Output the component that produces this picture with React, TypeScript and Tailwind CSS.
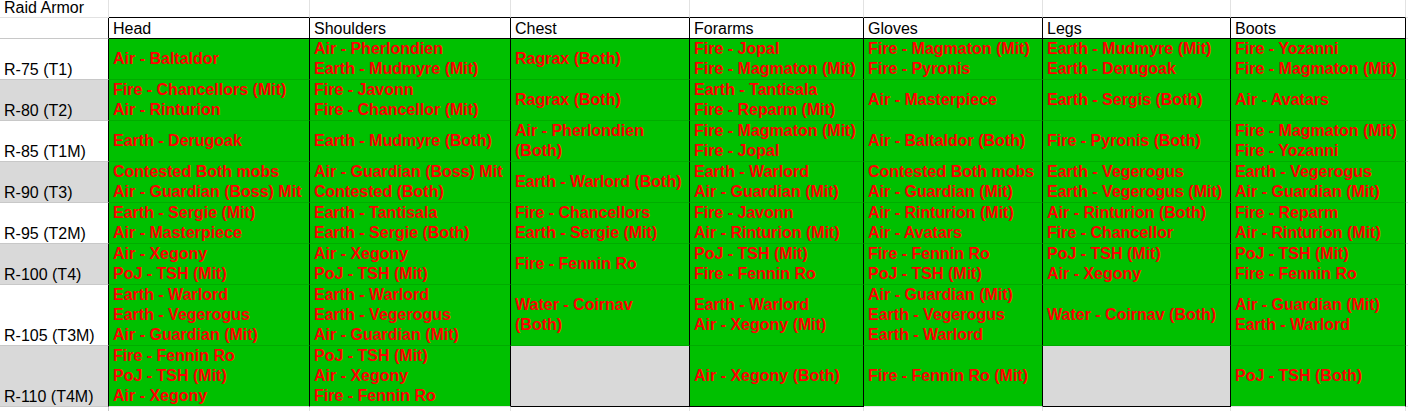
const headers = ['Head', 'Shoulders', 'Chest', 'Forarms', 'Gloves', 'Legs', 'Boots']

type Row = { label: string; gray: boolean; tall?: boolean; cells: (string[] | null)[] }

const rows: Row[] = [
  {
    label: 'R-75 (T1)',
    gray: false,
    cells: [
      ['Air - Baltaldor'],
      ['Air - Pherlondien', 'Earth - Mudmyre (Mit)'],
      ['Ragrax (Both)'],
      ['Fire - Jopal', 'Fire - Magmaton (Mit)'],
      ['Fire - Magmaton (Mit)', 'Fire - Pyronis'],
      ['Earth - Mudmyre (Mit)', 'Earth - Derugoak'],
      ['Fire - Yozanni', 'Fire - Magmaton (Mit)'],
    ],
  },
  {
    label: 'R-80 (T2)',
    gray: true,
    cells: [
      ['Fire - Chancellors (Mit)', 'Air - Rinturion'],
      ['Fire - Javonn', 'Fire - Chancellor (Mit)'],
      ['Ragrax (Both)'],
      ['Earth - Tantisala', 'Fire - Reparm (Mit)'],
      ['Air - Masterpiece'],
      ['Earth - Sergis (Both)'],
      ['Air - Avatars'],
    ],
  },
  {
    label: 'R-85 (T1M)',
    gray: false,
    cells: [
      ['Earth - Derugoak'],
      ['Earth - Mudmyre (Both)'],
      ['Air - Pherlondien', '(Both)'],
      ['Fire - Magmaton (Mit)', 'Fire - Jopal'],
      ['Air - Baltaldor (Both)'],
      ['Fire - Pyronis (Both)'],
      ['Fire - Magmaton (Mit)', 'Fire - Yozanni'],
    ],
  },
  {
    label: 'R-90 (T3)',
    gray: true,
    cells: [
      ['Contested Both mobs', 'Air - Guardian (Boss) Mit'],
      ['Air - Guardian (Boss) Mit', 'Contested (Both)'],
      ['Earth - Warlord (Both)'],
      ['Earth - Warlord', 'Air - Guardian (Mit)'],
      ['Contested Both mobs', 'Air - Guardian (Mit)'],
      ['Earth - Vegerogus', 'Earth - Vegerogus (Mit)'],
      ['Earth - Vegerogus', 'Air - Guardian (Mit)'],
    ],
  },
  {
    label: 'R-95 (T2M)',
    gray: false,
    cells: [
      ['Earth - Sergie (Mit)', 'Air - Masterpiece'],
      ['Earth - Tantisala', 'Earth - Sergie (Both)'],
      ['Fire - Chancellors', 'Earth - Sergie (Mit)'],
      ['Fire - Javonn', 'Air - Rinturion (Mit)'],
      ['Air - Rinturion (Mit)', 'Air - Avatars'],
      ['Air - Rinturion (Both)', 'Fire - Chancellor'],
      ['Fire - Reparm', 'Air - Rinturion (Mit)'],
    ],
  },
  {
    label: 'R-100 (T4)',
    gray: true,
    cells: [
      ['Air - Xegony', 'PoJ - TSH (Mit)'],
      ['Air - Xegony', 'PoJ - TSH (Mit)'],
      ['Fire - Fennin Ro'],
      ['PoJ - TSH (Mit)', 'Fire - Fennin Ro'],
      ['Fire - Fennin Ro', 'PoJ - TSH (Mit)'],
      ['PoJ - TSH (Mit)', 'Air - Xegony'],
      ['PoJ - TSH (Mit)', 'Fire - Fennin Ro'],
    ],
  },
  {
    label: 'R-105 (T3M)',
    gray: false,
    tall: true,
    cells: [
      ['Earth - Warlord', 'Earth - Vegerogus', 'Air - Guardian (Mit)'],
      ['Earth - Warlord', 'Earth - Vegerogus', 'Air - Guardian (Mit)'],
      ['Water - Coirnav', '(Both)'],
      ['Earth - Warlord', 'Air - Xegony (Mit)'],
      ['Air - Guardian (Mit)', 'Earth - Vegerogus', 'Earth - Warlord'],
      ['Water - Coirnav (Both)'],
      ['Air - Guardian (Mit)', 'Earth - Warlord'],
    ],
  },
  {
    label: 'R-110 (T4M)',
    gray: true,
    tall: true,
    cells: [
      ['Fire - Fennin Ro', 'PoJ - TSH (Mit)', 'Air - Xegony'],
      ['PoJ - TSH (Mit)', 'Air - Xegony', 'Fire - Fennin Ro'],
      null,
      ['Air - Xegony (Both)'],
      ['Fire - Fennin Ro (Mit)'],
      null,
      ['PoJ - TSH (Both)'],
    ],
  },
]

// columns whose last data cell carries a black bottom border
const boxedBottom = [2, 3, 5]

export default function App() {
  return (
    <main className="grid grid-cols-[109px_201px_201px_179px_174px_179px_188px_175px_1fr] grid-rows-[18px_21px_41px_41px_41px_41px_41px_41px_61px_61px_10px] bg-white font-['Liberation_Sans',sans-serif] text-[16px] leading-[normal] text-black">
      {/* title row */}
      <div className="flex items-end overflow-visible whitespace-nowrap border-r border-b border-[#e2e2e2] px-[4px]">
        Raid Armor
      </div>
      {headers.map((h) => (
        <div key={h} className="border-r border-b border-r-[#e2e2e2] border-b-black" />
      ))}
      <div className="border-b border-[#e2e2e2]" />

      {/* header row */}
      <div className="border-r border-b border-r-black border-b-[#c8c8c8]" />
      {headers.map((h) => (
        <div
          key={h}
          className="flex items-end whitespace-nowrap border-r border-b border-black px-[4px]"
        >
          {h}
        </div>
      ))}
      <div className="border-b border-[#e2e2e2]" />

      {rows.map((row, ri) => {
        const last = ri === rows.length - 1
        return [
          <div
            key={row.label}
            className={`flex items-end whitespace-nowrap border-r border-b border-r-black border-b-[#c8c8c8] px-[4px] ${
              row.gray ? 'bg-[#d9d9d9]' : 'bg-white'
            }`}
          >
            {row.label}
          </div>,
          ...row.cells.map((lines, ci) => {
            const bottom = last
              ? boxedBottom.includes(ci)
                ? 'border-b-black'
                : 'border-b-[#e2e2e2]'
              : 'border-b-[#00ab00]'
            return (
              <div
                key={`${row.label}-${ci}`}
                className={`flex flex-col justify-center whitespace-nowrap border-r border-b border-r-black px-[4px] text-[16px] leading-[20px] font-bold text-[#ff0000] ${bottom} ${
                  lines ? 'bg-[#00c000]' : 'bg-[#d9d9d9]'
                }`}
              >
                {lines?.map((l, li) => <span key={li}>{l}</span>)}
              </div>
            )
          }),
          <div key={`${row.label}-x`} className="border-b border-[#e2e2e2]" />,
        ]
      })}

      {/* trailing empty row */}
      <div className="border-r border-[#c8c8c8]" />
      {headers.map((h) => (
        <div key={`${h}-end`} className="border-r border-[#e2e2e2]" />
      ))}
      <div />
    </main>
  )
}
